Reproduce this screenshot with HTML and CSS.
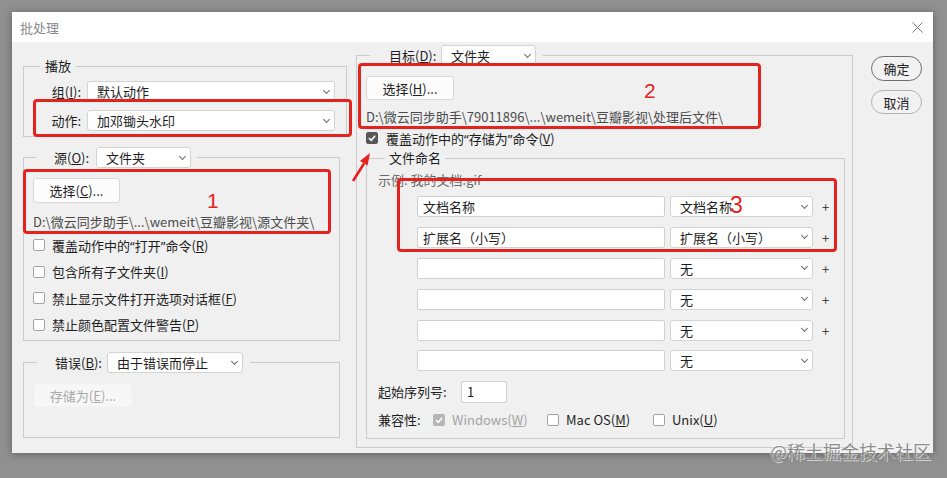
FILE: index.html
```html
<!DOCTYPE html>
<html lang="zh-CN">
<head>
    <meta charset="UTF-8">
    <title>批处理</title>
    <link rel="stylesheet" href="styles.css">
</head>
<body>
    <div class="dialog">
        <div class="titlebar">
            <span class="title">批处理</span>
            <svg class="close" width="11" height="11" viewBox="0 0 11 11">
                <path d="M0.5 0.5 L10.5 10.5 M10.5 0.5 L0.5 10.5" stroke="#7a7a7a" stroke-width="1" fill="none"/>
            </svg>
        </div>

        <div class="content">
            <!-- 左侧：播放 / 源 / 错误 -->
            <div class="col-left">
                <fieldset class="fs-play">
                    <legend>播放</legend>
                    <div class="fs-body">
                        <div class="field-row">
                            <label>组(<u>I</u>):</label>
                            <div class="select w-group"><span>默认动作</span><i class="caret"></i></div>
                        </div>
                        <div class="field-row">
                            <label>动作:</label>
                            <div class="select w-group"><span>加邓锄头水印</span><i class="caret"></i></div>
                        </div>
                    </div>
                </fieldset>

                <fieldset class="fs-src">
                    <legend>
                        <div class="legend-inner">
                            <label>源(<u>O</u>):</label>
                            <div class="select w-src"><span>文件夹</span><i class="caret"></i></div>
                        </div>
                    </legend>
                    <div class="fs-body">
                        <div class="btn btn-choose">选择(<u>C</u>)...</div>
                        <div class="path">D:\微云同步助手\...\wemeit\豆瓣影视\源文件夹\</div>
                        <div class="check-row"><span class="cb"></span><span>覆盖动作中的<span class="q">“</span>打开<span class="q">”</span>命令(<u>R</u>)</span></div>
                        <div class="check-row"><span class="cb"></span><span>包含所有子文件夹(<u>I</u>)</span></div>
                        <div class="check-row"><span class="cb"></span><span>禁止显示文件打开选项对话框(<u>F</u>)</span></div>
                        <div class="check-row"><span class="cb"></span><span>禁止颜色配置文件警告(<u>P</u>)</span></div>
                    </div>
                </fieldset>

                <fieldset class="fs-err">
                    <legend>
                        <div class="legend-inner">
                            <label>错误(<u>B</u>):</label>
                            <div class="select w-err"><span>由于错误而停止</span><i class="caret"></i></div>
                        </div>
                    </legend>
                    <div class="fs-body">
                        <div class="btn btn-disabled"><span>存储为(<u>E</u>)...</span></div>
                    </div>
                </fieldset>
            </div>

            <!-- 右侧：目标 -->
            <div class="col-right">
                <fieldset class="fs-dest">
                    <legend>
                        <div class="legend-inner">
                            <label>目标(<u>D</u>):</label>
                            <div class="select w-src"><span>文件夹</span><i class="caret"></i></div>
                        </div>
                    </legend>
                    <div class="fs-body">
                        <div class="btn btn-choose-h"><span>选择(<u>H</u>)...</span></div>
                        <div class="path path-dest">D:\微云同步助手\79011896\...\wemeit\豆瓣影视\处理后文件\</div>
                        <div class="check-row check-dest"><span class="cb checked"><svg width="10" height="10" viewBox="0 0 10 10"><path d="M2 5.2 L4.2 7.3 L8.2 2.8" stroke="#fff" stroke-width="1.6" fill="none"/></svg></span><span>覆盖动作中的<span class="q">“</span>存储为<span class="q">”</span>命令(<u>V</u>)</span></div>

                        <fieldset class="fs-name">
                            <legend>文件命名</legend>
                            <div class="fs-body">
                                <div class="example">示例: 我的文档.gif</div>
                                <div class="name-rows">
                                    <div class="name-row">
                                        <div class="input">文档名称</div>
                                        <div class="select w-name"><span>文档名称</span><i class="caret"></i></div>
                                        <span class="plus">+</span>
                                    </div>
                                    <div class="name-row">
                                        <div class="input">扩展名（小写）</div>
                                        <div class="select w-name"><span>扩展名（小写）</span><i class="caret"></i></div>
                                        <span class="plus">+</span>
                                    </div>
                                    <div class="name-row">
                                        <div class="input"></div>
                                        <div class="select w-name"><span>无</span><i class="caret"></i></div>
                                        <span class="plus">+</span>
                                    </div>
                                    <div class="name-row">
                                        <div class="input"></div>
                                        <div class="select w-name"><span>无</span><i class="caret"></i></div>
                                        <span class="plus">+</span>
                                    </div>
                                    <div class="name-row">
                                        <div class="input"></div>
                                        <div class="select w-name"><span>无</span><i class="caret"></i></div>
                                        <span class="plus">+</span>
                                    </div>
                                    <div class="name-row">
                                        <div class="input"></div>
                                        <div class="select w-name"><span>无</span><i class="caret"></i></div>
                                    </div>
                                </div>

                                <div class="serial-row">
                                    <label>起始序列号:</label>
                                    <div class="input input-serial">1</div>
                                </div>

                                <div class="compat-row">
                                    <label>兼容性:</label>
                                    <div class="compat-item w-win"><span class="cb checked disabled"><svg width="10" height="10" viewBox="0 0 10 10"><path d="M2 5.2 L4.2 7.3 L8.2 2.8" stroke="#fff" stroke-width="1.6" fill="none"/></svg></span><span class="muted">Windows(<u>W</u>)</span></div>
                                    <div class="compat-item w-mac"><span class="cb"></span><span>Mac OS(<u>M</u>)</span></div>
                                    <div class="compat-item"><span class="cb"></span><span>Unix(<u>U</u>)</span></div>
                                </div>
                            </div>
                        </fieldset>
                    </div>
                </fieldset>
            </div>

            <!-- 确定 / 取消 -->
            <div class="col-buttons">
                <div class="pill pill-default">确定</div>
                <div class="pill">取消</div>
            </div>
        </div>

        <!-- 标注 -->
        <div class="mark mark-1"></div>
        <div class="mark mark-src"></div>
        <div class="mark mark-2"></div>
        <div class="mark mark-3"></div>
        <span class="mark-num num-1">1</span>
        <span class="mark-num num-2">2</span>
        <span class="mark-num num-3">3</span>
        <svg class="arrow" width="24" height="38" viewBox="0 0 24 38">
            <path d="M3 33 L14 15.5" stroke="#e4221e" stroke-width="2.6" fill="none"/>
            <path d="M20 5 L17.6 17.6 L10 13 Z" fill="#e4221e"/>
        </svg>
    </div>

    <div class="watermark">@稀土掘金技术社区</div>
</body>
</html>
```

FILE: styles.css
```css
* {
    box-sizing: border-box;
}

body {
    margin: 0;
    width: 947px;
    height: 478px;
    overflow: hidden;
    padding: 12px;
    position: relative;
    background-color: #909090;
    font-family: "Noto Sans CJK SC", "Noto Sans", sans-serif;
    font-size: 13px;
    color: #1e1e1e;
}

u {
    text-decoration: underline;
    text-underline-offset: 1px;
}

.q {
    font-family: "Noto Sans", sans-serif;
}

.dialog {
    width: 921px;
    height: 441px;
    background: #f0f0f0;
    position: relative;
    box-shadow: 0 1px 8px rgba(0,0,0,0.35);
}

.titlebar {
    height: 30px;
    background: #fff;
    display: flex;
    align-items: center;
    justify-content: space-between;
    padding: 0 10px 0 8px;
}

.title {
    color: #8a8a8a;
}

.content {
    display: flex;
    padding: 3px 11px 0;
}

.col-left {
    width: 324px;
    margin-top: 11px;
    display: flex;
    flex-direction: column;
    align-items: flex-start;
}

.col-right {
    width: 497px;
    margin-left: 9px;
}

.col-buttons {
    width: 51px;
    margin-left: 18px;
    margin-top: 11px;
    display: flex;
    flex-direction: column;
    gap: 9px;
}

fieldset {
    margin: 0;
    padding: 0;
    border: 1px solid #cbcbcb;
    min-width: 0;
}

legend {
    padding: 0;
    line-height: 20px;
}

.legend-inner {
    display: flex;
    align-items: center;
}

/* 通用控件 */
.select {
    height: 21px;
    background: #fff;
    border: 1px solid #d3d3d3;
    border-radius: 3px;
    display: flex;
    align-items: center;
    justify-content: space-between;
    padding: 0 5px 0 9px;
    white-space: nowrap;
}

.caret {
    width: 5px;
    height: 5px;
    border-right: 1px solid #6a6a6a;
    border-bottom: 1px solid #6a6a6a;
    transform: rotate(45deg);
    margin-top: -3px;
}

.input {
    height: 21px;
    background: #fff;
    border: 1px solid #d0d0d0;
    border-radius: 2px;
    padding: 0 5px;
    line-height: 19px;
    white-space: nowrap;
}

.btn {
    height: 25px;
    background: #fcfcfc;
    border: 1px solid #d8d8d8;
    border-radius: 3px;
    display: flex;
    align-items: center;
    justify-content: center;
}

.path {
    line-height: 21px;
    margin-top: 8px;
    color: #4b4b4b;
    white-space: nowrap;
}

.check-row {
    height: 26.5px;
    display: flex;
    align-items: center;
    gap: 7px;
    white-space: nowrap;
}

.cb {
    width: 12px;
    height: 12px;
    flex: none;
    border: 1px solid #a3a3a3;
    border-radius: 2px;
    background: #fff;
    display: flex;
    align-items: center;
    justify-content: center;
}

.cb.checked {
    background: #585858;
    border-color: #585858;
}

.cb.checked.disabled {
    background: #b6b6b6;
    border-color: #b6b6b6;
}

.muted {
    color: #a3a3a3;
}

/* 播放 */
.fs-play {
    width: 324px;
}

.fs-play legend {
    margin-left: 16px;
    padding: 0 5px;
}

.fs-play .fs-body {
    padding: 5px 11px 5px 0;
    display: flex;
    flex-direction: column;
    gap: 8px;
}

.field-row {
    display: flex;
    align-items: center;
}

.field-row label {
    width: 57px;
    text-align: right;
    margin-right: 6px;
}

.w-group {
    width: 248px;
}

/* 源 */
.fs-src {
    width: 317px;
    margin-top: 10px;
}

.fs-src legend {
    margin-left: 12px;
    padding: 0 6px 0 18px;
}

.fs-src .legend-inner label {
    width: 42px;
}

.w-src {
    width: 95px;
}

.fs-src .fs-body {
    padding: 10px 0 2px 9px;
}

.btn-choose {
    width: 87px;
}

/* 错误 */
.fs-err {
    width: 317px;
    margin-top: 11px;
}

.fs-err legend {
    margin-left: 13px;
    padding: 0 7px 0 18px;
}

.fs-err .legend-inner label {
    width: 52px;
}

.w-err {
    width: 136px;
}

.fs-err .fs-body {
    padding: 11px 0 30px 10px;
}

.btn-disabled {
    width: 98px;
    height: 23px;
    background: #f7f7f7;
    border-color: #f4f4f4;
    color: #a9a9a9;
}

/* 目标 */
.fs-dest {
    width: 497px;
}

.fs-dest legend {
    margin-left: 13px;
    padding: 0 7px 0 19px;
}

.fs-dest .legend-inner label {
    width: 52px;
}

.fs-dest > .fs-body {
    padding: 10px 7px 8px 9px;
}

.btn-choose-h {
    width: 88px;
    height: 24px;
}

.path-dest {
    margin-top: 7px;
    line-height: 20px;
}

.check-dest {
    height: 20px;
    margin-top: 1px;
    gap: 8px;
}

/* 文件命名 */
.fs-name {
    width: 479px;
}

.fs-name legend {
    margin-left: 18px;
    padding: 0 4px;
}

.fs-name .fs-body {
    padding: 2px 0 8px 11px;
}

.example {
    line-height: 20px;
    color: #6a6a6a;
}

.name-rows {
    margin: 6px 0 0 39px;
    display: flex;
    flex-direction: column;
    gap: 9.9px;
}

.name-row {
    display: flex;
    align-items: center;
}

.name-row .input {
    width: 248px;
}

.w-name {
    width: 143px;
    margin-left: 5px;
}

.plus {
    margin-left: 9px;
    color: #444;
}

.serial-row {
    display: flex;
    align-items: center;
    margin-top: 9.5px;
}

.serial-row label {
    width: 83px;
}

.input-serial {
    width: 46px;
    height: 22px;
    line-height: 20px;
}

.compat-row {
    display: flex;
    align-items: center;
    height: 20px;
    margin-top: 7px;
}

.compat-row label {
    width: 55px;
}

.compat-item {
    display: flex;
    align-items: center;
    gap: 7px;
    white-space: nowrap;
}

.w-win {
    width: 114px;
}

.w-mac {
    width: 106px;
}

/* 确定 / 取消 */
.pill {
    height: 24px;
    border: 1px solid #b3b3b3;
    border-radius: 13px;
    background: #f2f2f2;
    display: flex;
    align-items: center;
    justify-content: center;
}

.pill-default {
    height: 25px;
    border: 1.5px solid #6f6f6f;
}

/* 红色标注 */
.mark {
    position: absolute;
    border: 3px solid #e4221e;
    border-radius: 4px;
}

.mark-1 {
    left: 21px;
    top: 87px;
    width: 319px;
    height: 38px;
}

.mark-src {
    left: 11px;
    top: 157px;
    width: 308px;
    height: 65px;
}

.mark-2 {
    left: 346px;
    top: 51px;
    width: 403px;
    height: 66px;
}

.mark-3 {
    left: 385px;
    top: 166px;
    width: 440px;
    height: 74px;
}

.mark-num {
    position: absolute;
    font-family: "Liberation Sans", Arial, sans-serif;
    font-size: 21px;
    line-height: 21px;
    color: #e4221e;
}

.num-1 {
    left: 195px;
    top: 178px;
}

.num-2 {
    left: 632px;
    top: 68px;
}

.num-3 {
    left: 718px;
    top: 183px;
    font-size: 23px;
}

.arrow {
    position: absolute;
    left: 338px;
    top: 136px;
}

.watermark {
    position: absolute;
    left: 770px;
    top: 441px;
    font-size: 18px;
    line-height: 20px;
    color: #8c8c8c;
    text-shadow: 1px 1px 0 rgba(255,255,255,0.6), -1px -1px 0 rgba(255,255,255,0.35);
}
```
